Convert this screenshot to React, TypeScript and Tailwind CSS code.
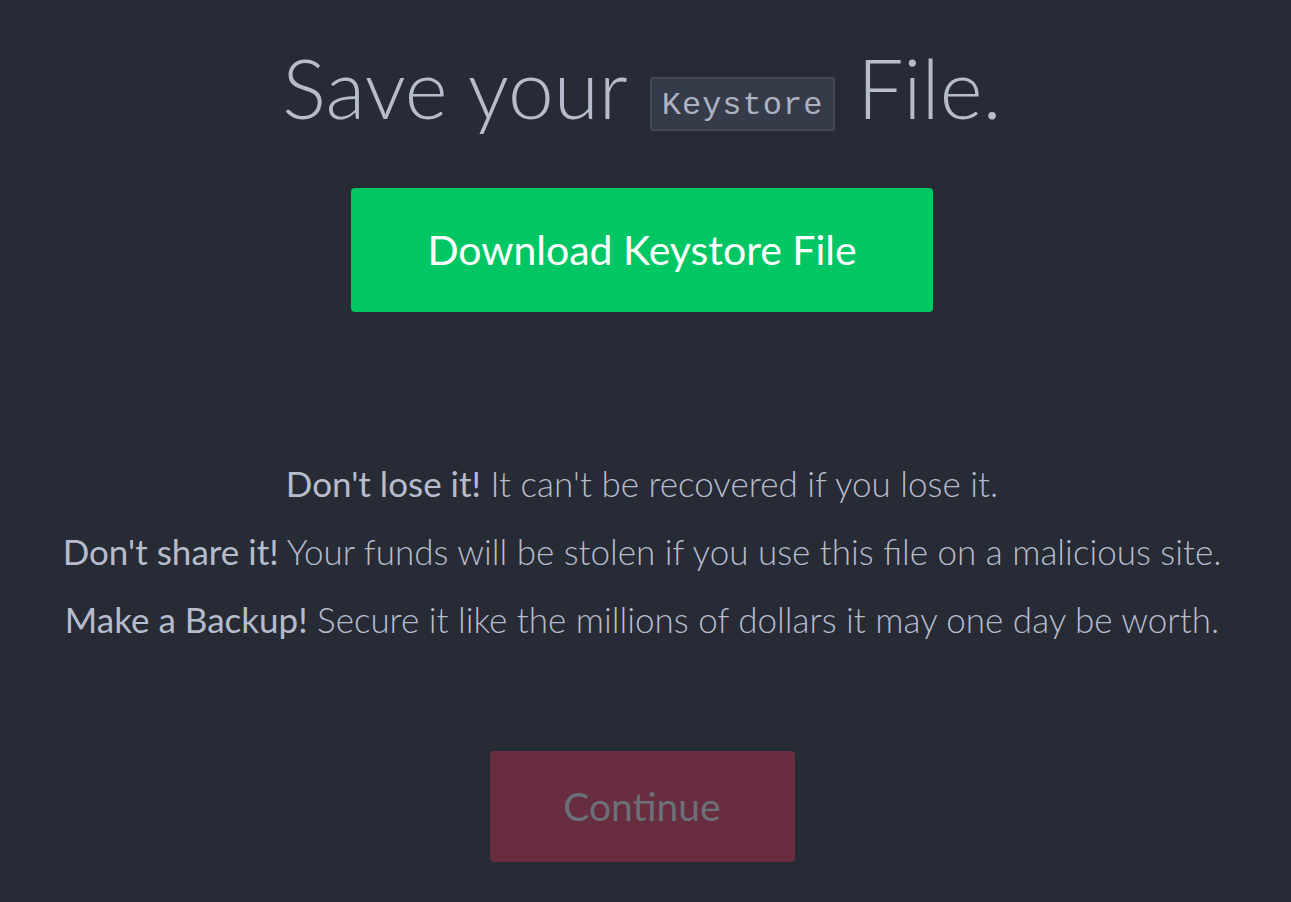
export default function App() {
    return (
        <div className="min-h-[902px] w-full bg-[#272b35] pr-[7px] font-['Lato','Noto_Sans',sans-serif] text-[#b7bccd]">
            <div className="flex flex-col items-center pt-[37px]">
                {/* Heading */}
                <h1 className="flex items-center gap-[22px] text-[82px] font-light leading-[100px]">
                    <span>Save your</span>
                    <code className="mt-[34px] rounded-[3px] border-2 border-[#454a59] bg-[#363b4a] px-[10px] pt-[3px] font-['Liberation_Mono',monospace] text-[32px] font-normal leading-[47px] tracking-[1px] text-[#adb2c3]">
                        Keystore
                    </code>
                    <span>File.</span>
                </h1>

                {/* Download button */}
                <button className="mt-[51px] h-[124px] w-[582px] rounded-[4px] bg-[#00c764] text-[41px] font-normal text-white">
                    Download Keystore File
                </button>

                {/* Warnings */}
                <div className="mt-[146px] flex flex-col items-center gap-[18px] text-[35px] font-light leading-[50px]">
                    <p>
                        <strong className="font-normal">Don't lose it!</strong> It can't be recovered if you lose it.
                    </p>
                    <p>
                        <strong className="font-normal">Don't share it!</strong> Your funds will be stolen if you use this file on a malicious site.
                    </p>
                    <p>
                        <strong className="font-normal">Make a Backup!</strong> Secure it like the millions of dollars it may one day be worth.
                    </p>
                </div>

                {/* Continue */}
                <button className="mt-[107px] h-[111px] w-[305px] rounded-[4px] bg-[#682d3e] text-[39px] font-normal text-[#6b7079]">
                    Continue
                </button>
            </div>
        </div>
    );
}
